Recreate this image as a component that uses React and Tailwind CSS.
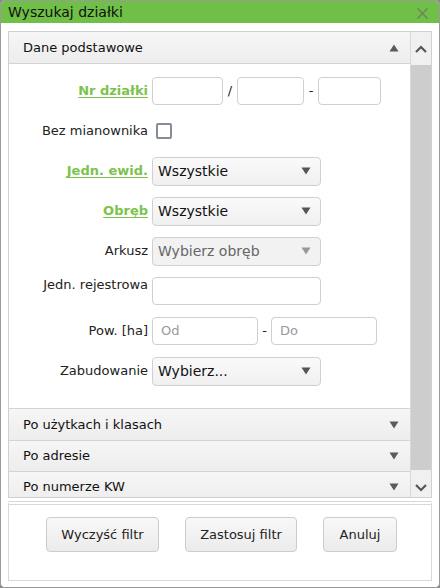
const font = { fontFamily: '"DejaVu Sans", Verdana, sans-serif' };

function Tri({ up = false, className = 'text-[#555]' }) {
  return (
    <svg width="10" height="8" viewBox="0 0 10 8" className={className}>
      {up ? <path d="M5 0.5 L9.5 7.5 L0.5 7.5 Z" fill="currentColor" /> : <path d="M0.5 0.5 L9.5 0.5 L5 7.5 Z" fill="currentColor" />}
    </svg>
  );
}

function Chevron({ up = false }) {
  return (
    <svg width="12" height="8" viewBox="0 0 12 8" className="text-[#555]">
      <path d={up ? 'M1 7 L6 2 L11 7' : 'M1 1 L6 6 L11 1'} fill="none" stroke="currentColor" strokeWidth="2.2" />
    </svg>
  );
}

function CloseIcon() {
  return (
    <svg width="11" height="11" viewBox="0 0 11 11" className="mt-[7px] shrink-0">
      <path d="M0.5 0.5 L10.5 10.5 M10.5 0.5 L0.5 10.5" fill="none" stroke="#6b8560" strokeWidth="1.5" />
    </svg>
  );
}

function Label({ children, link = false, top = false }) {
  return (
    <div
      className={`w-[139px] shrink-0 text-right text-[13px] ${top ? 'self-start pt-[1px] leading-none' : ''} ${
        link ? 'font-bold text-[#7cc24e] underline underline-offset-2' : 'text-[#222]'
      }`}
    >
      {children}
    </div>
  );
}

function Input({ w, placeholder }) {
  return (
    <div className={`${w} h-[28px] rounded-[4px] border border-[#cfcfcf] bg-white pl-[8px] flex items-center text-[13px] text-[#999]`}>
      {placeholder}
    </div>
  );
}

function Select({ value, disabled = false }) {
  return (
    <div
      className={`w-[169px] h-[29px] rounded-[4px] border border-[#d0d0d0] flex items-center justify-between pl-[5px] pr-[9px] text-[14px] ${
        disabled ? 'bg-[#f2f2f2] text-[#666]' : 'bg-gradient-to-b from-[#fafafa] to-[#f0f0f0] text-[#111]'
      }`}
    >
      <span>{value}</span>
      <Tri className={disabled ? 'text-[#999]' : 'text-[#555]'} />
    </div>
  );
}

function Row({ children, top = false }) {
  return <div className={`h-[28px] flex ${top ? 'items-start' : 'items-center'} gap-[4px]`}>{children}</div>;
}

function Header({ title, up = false, h = 'h-[32px]' }) {
  return (
    <div className={`${h} shrink-0 flex items-center justify-between pl-[14px] pr-[11px] bg-gradient-to-b from-[#f6f6f6] to-[#ededed] border-b border-[#d4d4d4] text-[13px] text-[#111]`}>
      <span>{title}</span>
      <Tri up={up} className="text-[#5a5a5a]" />
    </div>
  );
}

function Button({ children, w }) {
  return (
    <button className={`${w} h-[35px] rounded-[4px] border border-[#cccccc] bg-gradient-to-b from-[#f8f8f8] to-[#ebebeb] text-[13px] text-[#222]`}>
      {children}
    </button>
  );
}

export default function App() {
  return (
    <div style={font} className="w-[440px] h-[588px] bg-[#8a8a8a]">
      <div className="w-full h-full flex flex-col rounded-[5px] border border-[#9a9a9a] bg-white overflow-hidden">
        <div className="h-[22px] shrink-0 bg-[#70bf46] flex items-start justify-between pl-[7px] pr-[11px]">
          <span className="text-[14px] leading-[22px] text-[#111]">Wyszukaj działki</span>
          <CloseIcon />
        </div>
        <div className="flex-1 flex flex-col px-[7px] pt-[8px] pb-[6px] bg-white">
          <div className="h-[467px] shrink-0 flex border border-[#d0d0d0]">
            <div className="flex-1 flex flex-col overflow-hidden">
              <Header title="Dane podstawowe" up />
              <div className="shrink-0 flex flex-col gap-[12px] pt-[13px] pb-[23px] border-b border-[#d4d4d4] bg-white">
                <Row>
                  <Label link>Nr działki</Label>
                  <Input w="w-[71px]" />
                  <span className="w-[6px] text-center text-[13px] text-[#222]">/</span>
                  <Input w="w-[67px]" />
                  <span className="w-[6px] text-center text-[13px] text-[#222]">-</span>
                  <Input w="w-[63px]" />
                </Row>
                <Row>
                  <Label>Bez mianownika</Label>
                  <div className="ml-[4px] w-[16px] h-[16px] rounded-[2px] border-2 border-[#8a8a98] bg-white" />
                </Row>
                <Row>
                  <Label link>Jedn. ewid.</Label>
                  <Select value="Wszystkie" />
                </Row>
                <Row>
                  <Label link>Obręb</Label>
                  <Select value="Wszystkie" />
                </Row>
                <Row>
                  <Label>Arkusz</Label>
                  <Select value="Wybierz obręb" disabled />
                </Row>
                <Row top>
                  <Label top>Jedn. rejestrowa</Label>
                  <Input w="w-[169px]" />
                </Row>
                <Row>
                  <Label>Pow. [ha]</Label>
                  <Input w="w-[106px]" placeholder="Od" />
                  <span className="w-[5px] text-center text-[13px] text-[#222]">-</span>
                  <Input w="w-[106px]" placeholder="Do" />
                </Row>
                <Row>
                  <Label>Zabudowanie</Label>
                  <Select value="Wybierz..." />
                </Row>
              </div>
              <Header title="Po użytkach i klasach" />
              <Header title="Po adresie" h="h-[31px]" />
              <Header title="Po numerze KW" h="h-[31px]" />
            </div>
            <div className="w-[21px] shrink-0 flex flex-col border-l border-[#d8d8d8] bg-[#f0f0f0]">
              <div className="h-[33px] flex items-center justify-center">
                <Chevron up />
              </div>
              <div className="h-[405px] bg-[#cdcdcd]" />
              <div className="flex-1 flex items-end justify-center pb-[5px]">
                <Chevron />
              </div>
            </div>
          </div>
          <div className="mt-[3px] flex-1 flex flex-col border border-t-[4px] border-double border-[#d8d8d8]">
            <div className="h-[12px]" />
            <div className="flex justify-center gap-[26px] pl-[3px]">
              <Button w="w-[113px]">Wyczyść filtr</Button>
              <Button w="w-[112px]">Zastosuj filtr</Button>
              <Button w="w-[74px]">Anuluj</Button>
            </div>
          </div>
        </div>
      </div>
    </div>
  );
}
